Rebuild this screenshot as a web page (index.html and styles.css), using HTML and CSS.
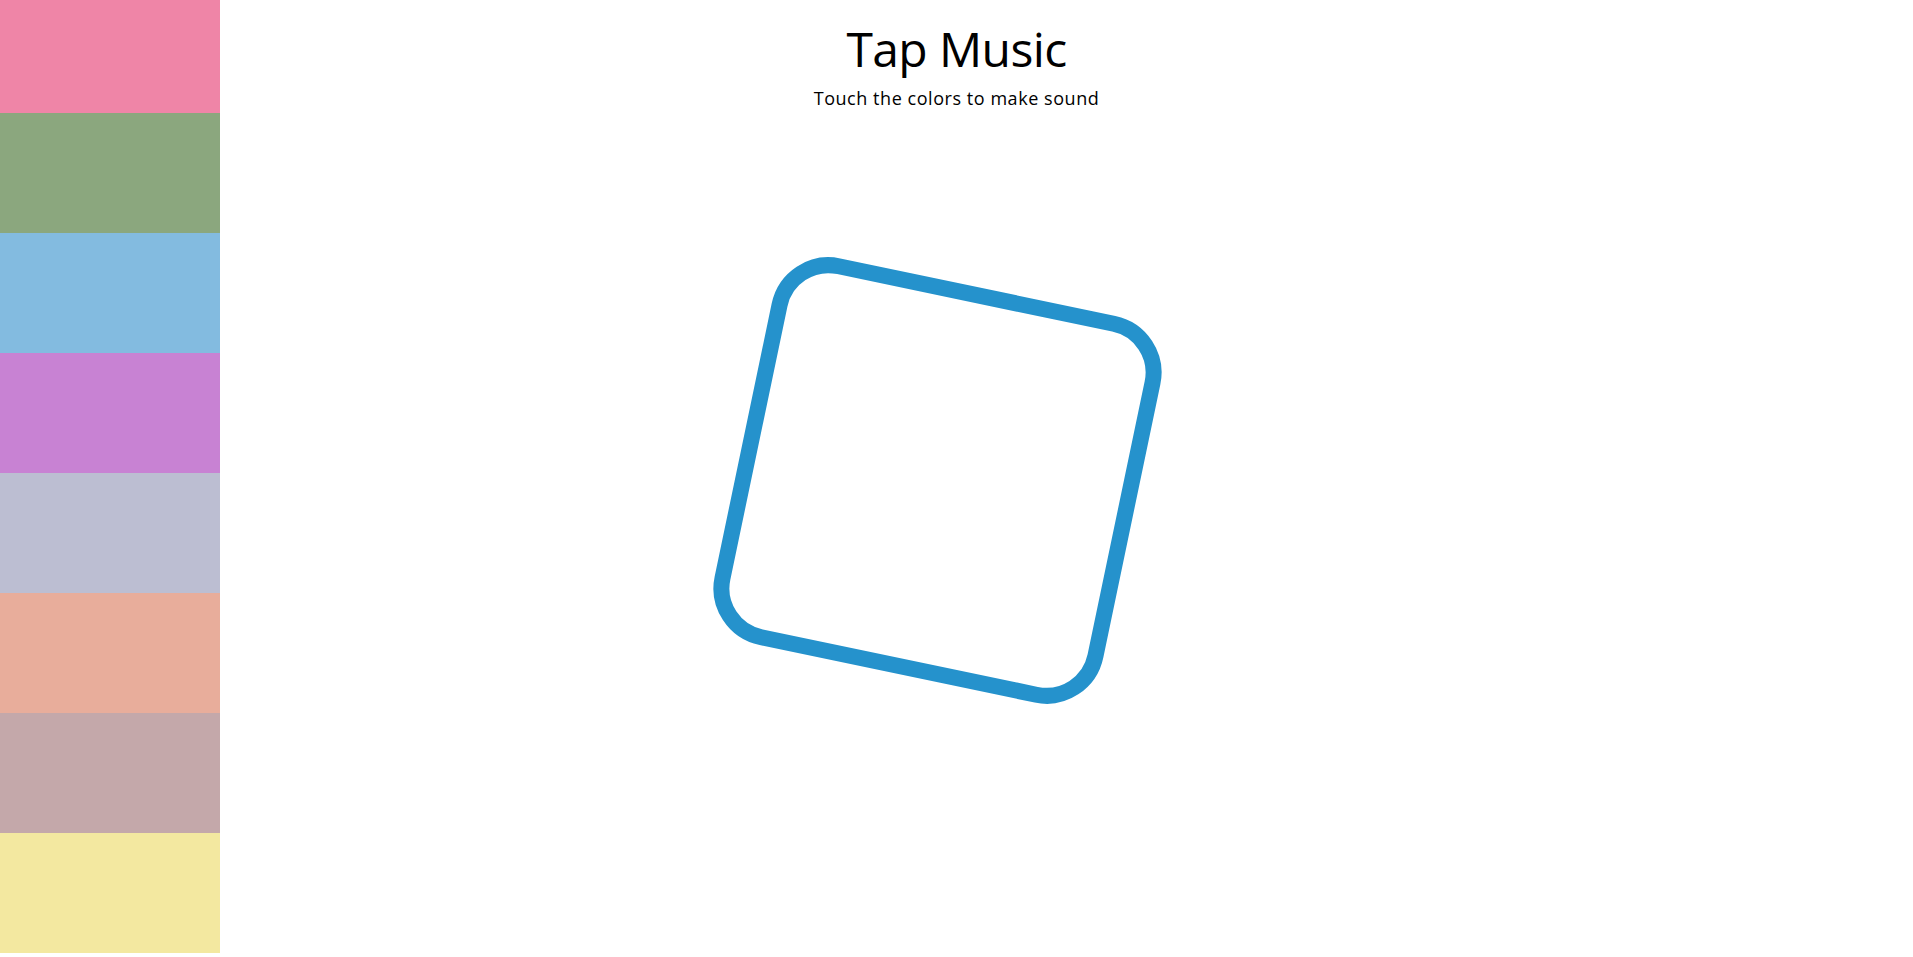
FILE: index.html
```html
<!DOCTYPE html>
<html lang="en">
<head>
<meta charset="utf-8">
<title>Tap Music</title>
<link rel="stylesheet" href="styles.css">
</head>
<body>
  <div class="app">
    <aside class="pads">
      <div class="pad pad1"></div>
      <div class="pad pad2"></div>
      <div class="pad pad3"></div>
      <div class="pad pad4"></div>
      <div class="pad pad5"></div>
      <div class="pad pad6"></div>
      <div class="pad pad7"></div>
      <div class="pad pad8"></div>
    </aside>
    <main class="main">
      <header class="header">
        <h1 class="title">Tap Music</h1>
        <p class="subtitle">Touch the colors to make sound</p>
      </header>
      <section class="visual">
        <div class="shape"></div>
      </section>
    </main>
  </div>
</body>
</html>
```

FILE: styles.css
```css
html, body {
  margin: 0;
  padding: 0;
  background: #ffffff;
}

body {
  font-family: "Open Sans", "Noto Sans", sans-serif;
  color: #000000;
  overflow: hidden;
}

.app {
  display: flex;
  height: 957px;
}

.pads {
  width: 220px;
  flex: 0 0 220px;
  display: flex;
  flex-direction: column;
  height: 953px;
}

.pad {
  height: 120px;
  flex: 0 0 auto;
}

.pad1 { height: 113px; background: #ef85a7; }
.pad2 { background: #8ba77e; }
.pad3 { background: #83bbe0; }
.pad4 { background: #c882d3; }
.pad5 { background: #bcbed2; }
.pad6 { background: #e8ad9b; }
.pad7 { background: #c4a8aa; }
.pad8 { background: #f3e8a0; }

.main {
  flex: 1;
  padding-right: 220px;
  display: flex;
  flex-direction: column;
  align-items: center;
}

.header {
  display: flex;
  flex-direction: column;
  align-items: center;
  padding-top: 16px;
}

.title {
  margin: 0;
  font-size: 48px;
  font-weight: 500;
  line-height: normal;
  letter-spacing: -0.6px;
}

.subtitle {
  margin: 5px 0 0 0;
  font-size: 18px;
  font-weight: 500;
  line-height: normal;
  letter-spacing: 0.55px;
}

.visual {
  display: flex;
  justify-content: center;
  margin-top: 174px;
}

.shape {
  width: 397px;
  height: 395px;
  box-sizing: border-box;
  border: 16px solid #2592cc;
  border-radius: 58px;
  transform: translate(-19px, -1px) rotate(11.8deg);
}
```
